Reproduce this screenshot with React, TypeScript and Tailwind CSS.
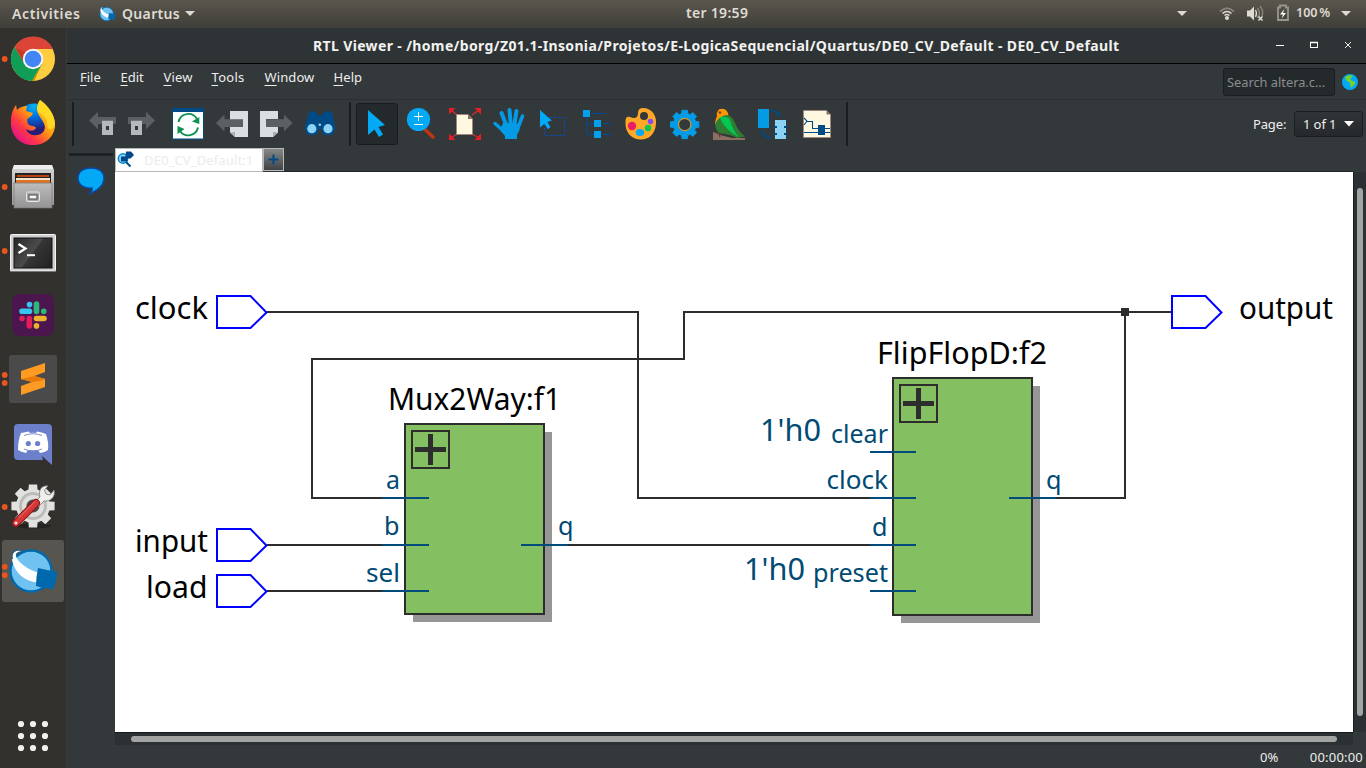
import type { ReactNode } from "react";

type ArtProps = { x: number; y: number; w: number; h: number; children: ReactNode };

function Art({ x, y, w, h, children }: ArtProps) {
  return (
    <svg className="block shrink-0" width={w} height={h} viewBox={`${x} ${y} ${w} ${h}`} fill="none">
      {children}
    </svg>
  );
}

function Tool({ x, w, children }: { x: number; w: number; children: ReactNode }) {
  return (
    <Art x={x} y={100} w={w} h={48}>
      {children}
    </Art>
  );
}

function QuartusLogo() {
  return (
    <>
      <circle cx="31" cy="571" r="20.5" fill="#70c2f0" stroke="#0068ac" strokeWidth="2.400" />
      <path d="M22 551C12 548 10 558 14 566C18 576 27 581 36.500 582.500L38 572.500C26 569 17 561 16 556C15.500 552.500 18 551.500 22 551Z" fill="#fff" />
      <path d="M22 550.500C14 548.500 11 553 12.500 559" stroke="#0068ac" strokeWidth="1" />
      <path d="M38 568Q47 570 57 571.500Q57 580 53 589Q44 589 36 586Q36 577 38 568Z" fill="#0068ac" />
    </>
  );
}

const gearPath = (cx: number, cy: number, r: number, inner: number) => {
  const pts: string[] = [];
  for (let i = 0; i < 8; i++) {
    const a = (i * Math.PI) / 4;
    [
      [inner, -0.27],
      [r, -0.19],
      [r, 0.19],
      [inner, 0.27],
    ].forEach(([rad, d]) => pts.push(`${(cx + rad * Math.cos(a + d)).toFixed(2)} ${(cy + rad * Math.sin(a + d)).toFixed(2)}`));
  }
  return `M${pts.join("L")}Z`;
};

function Dots({ ys }: { ys: number[] }) {
  return (
    <>
      {ys.map((y) => (
        <circle key={y} cx="4.700" cy={y} r="2.900" fill="#e95420" />
      ))}
    </>
  );
}

function TopBar() {
  return (
    <header className="flex h-7 shrink-0 items-center bg-linear-to-b from-[#59564e] to-[#403e39] text-[14px] font-semibold text-[#dfdbd2]">
      <span className="-mt-px ml-3 w-[69px] whitespace-nowrap tracking-[0.6px]">Activities</span>
      <svg className="ml-[18px] block" width="17" height="16" viewBox="8 548 51 46" fill="none">
        <QuartusLogo />
      </svg>
      <span className="-mt-px ml-[6px] w-[58px] whitespace-nowrap tracking-[0.330px]">Quartus</span>
      <Art x={180} y={0} w={20} h={28}>
        <path d="M185 11h10l-5 5z" fill="#dfdbd2" />
      </Art>
      <span className="-mt-[2px] ml-[486px] w-[66px] whitespace-nowrap text-[14px] tracking-[0.300px]">ter 19:59</span>
      <div className="grow" />
      <Art x={1170} y={0} w={124} h={28}>
        <path d="M1177 11h10l-5 5z" fill="#dfdbd2" />
        <path d="M1220 11.500Q1227 5 1234 11.500" stroke="#858178" strokeWidth="2" />
        <path d="M1222.500 13.500Q1227 9.500 1231.500 13.500M1224.500 15.500Q1227 13.500 1229.500 15.500" stroke="#dfdbd2" strokeWidth="1.600" />
        <circle cx="1227" cy="18" r="2" fill="#dfdbd2" />
        <path d="M1247 10.500h3l4-4v14l-4-4h-3z" fill="#dfdbd2" />
        <path d="M1255.500 10q2 3.500 0 7" stroke="#dfdbd2" strokeWidth="1.300" />
        <path d="M1257.500 8q4 5.500 0 10M1260 6q4 5 2 10" stroke="#858178" strokeWidth="1.500" />
        <path d="M1258.500 16.500l4 4m0-4l-4 4" stroke="#dfdbd2" strokeWidth="1.600" />
        <path d="M1278 7.500h2v-2h6v2h2v12.500h-10z" stroke="#99968e" strokeWidth="1.800" />
        <path d="M1284.500 9l-4.500 5.500h3l-1.500 4 4.500-5.500h-3z" fill="#fff" />
      </Art>
      <span className="-mt-[2px] ml-[2px] w-[38px] whitespace-nowrap text-[12.500px] [word-spacing:-1.500px]">100 %</span>
      <Art x={1334} y={0} w={32} h={28}>
        <path d="M1341 11h10l-5 5z" fill="#dfdbd2" />
      </Art>
    </header>
  );
}

function Dock() {
  return (
    <aside className="flex w-[67px] shrink-0 flex-col border-r border-[#3c3b31] bg-[#33312d]">
      <Art x={0} y={28} w={66} h={62}>
        <Dots ys={[59]} />
        <circle cx="33" cy="59" r="22" fill="#ffcd40" />
        <path d="M33 59L14.500 47A22 22 0 0 1 53 49H33Z" fill="#db4437" />
        <path d="M14.500 47A22 22 0 0 0 32 81L42 64L33 59L25 64Z" fill="#0f9d58" />
        <path d="M14.500 47L24 63L30 55Z" fill="#c53929" />
        <path d="M42 64L32 81L34 81Z" fill="#bf9000" />
        <circle cx="33" cy="59" r="10.200" fill="#f5f5f5" />
        <circle cx="33" cy="59" r="8.300" fill="#4285f4" />
      </Art>
      <Art x={0} y={90} w={66} h={65}>
        <defs>
          <linearGradient id="foxBody" x1="50" y1="104" x2="16" y2="138" gradientUnits="userSpaceOnUse">
            <stop stopColor="#ffe226" />
            <stop offset="0.450" stopColor="#ff980e" />
            <stop offset="0.750" stopColor="#ff3647" />
            <stop offset="1" stopColor="#e31587" />
          </linearGradient>
          <radialGradient id="foxGlobe" cx="34" cy="106" r="24" gradientUnits="userSpaceOnUse">
            <stop stopColor="#00b7f4" />
            <stop offset="0.500" stopColor="#0068dd" />
            <stop offset="1" stopColor="#281c75" />
          </radialGradient>
        </defs>
        <circle cx="34" cy="122" r="18.500" fill="url(#foxGlobe)" />
        <path d="M40 100C48 106 56 116 55 127C53 140 42 146 31 145C18 144 10 133 11 121C11 114 13 109 16 105L17 110C20 107 23 106 27 106L26 111L33 113C32 117 28 117 27 120L28 124C31 127 34 125 36 128C33 132 29 131 26 129C28 136 39 138 44 131C48 123 38 118 37 110C37 106 38 102 40 100Z" fill="url(#foxBody)" />
        <path d="M40 100C48 105 55 115 55 124C51 133 47 130 47 122C47 116 37 113 37 109C37 105 39 103 40 100Z" fill="#ffdf27" opacity="0.800" />
      </Art>
      <Art x={0} y={155} w={66} h={65}>
        <defs>
          <linearGradient id="steel" x1="0" y1="166" x2="0" y2="208" gradientUnits="userSpaceOnUse">
            <stop stopColor="#d7d7d7" />
            <stop offset="1" stopColor="#949494" />
          </linearGradient>
        </defs>
        <Dots ys={[187]} />
        <path d="M14 165H52L54 170V205H12V170Z" fill="url(#steel)" />
        <path d="M14 165H52L53 169H13Z" fill="#eee" />
        <rect x="15" y="173" width="36" height="12" fill="#232323" />
        <rect x="17" y="175" width="32" height="2" fill="#b84415" />
        <rect x="16" y="178" width="34" height="2" fill="#f6e7cc" />
        <rect x="16" y="180" width="34" height="3" fill="#df7426" />
        <rect x="14" y="183" width="38" height="25" fill="url(#steel)" stroke="#777" strokeWidth="0.700" />
        <rect x="26.500" y="192" width="13" height="9.500" rx="1.500" fill="#a8a8a8" stroke="#e6e6e6" />
        <rect x="29" y="195" width="8" height="4" fill="#f6f6f6" stroke="#444" />
      </Art>
      <Art x={0} y={220} w={66} h={64}>
        <defs>
          <linearGradient id="screen" x1="15" y1="240" x2="50" y2="266" gradientUnits="userSpaceOnUse">
            <stop stopColor="#2a2a2a" />
            <stop offset="0.480" stopColor="#4b4b4b" />
            <stop offset="0.520" stopColor="#353535" />
            <stop offset="1" stopColor="#232323" />
          </linearGradient>
        </defs>
        <Dots ys={[251]} />
        <rect x="10.500" y="234.500" width="45" height="36.500" rx="1" fill="#cfcfcf" stroke="#f4f4f4" />
        <path d="M10 271.500H56" stroke="#777" />
        <rect x="14" y="238" width="38" height="30" fill="url(#screen)" stroke="#111" />
        <path d="M18.500 244l7 4.500-7 4.500" stroke="#fff" strokeWidth="2.300" />
        <path d="M27 255.200h8" stroke="#fff" strokeWidth="2" />
      </Art>
      <Art x={0} y={284} w={66} h={63}>
        <rect x="12" y="294" width="42" height="42" rx="8" fill="#4b154d" />
        <g strokeWidth="5.600" strokeLinecap="round">
          <path d="M22 311.300h7.500M29.500 304.500v.1" stroke="#36c5f0" />
          <path d="M36.500 304v7.500M43.700 311.300h.1" stroke="#2eb67d" />
          <path d="M36.500 318.500h7.500M36.500 325.800v.1" stroke="#ecb22e" />
          <path d="M29.300 318.500v7.500M22 318.500h.1" stroke="#e01e5a" />
        </g>
      </Art>
      <Art x={0} y={347} w={66} h={65}>
        <Dots ys={[375, 383]} />
        <rect x="9" y="355" width="48" height="48" rx="2.500" fill="#4a4a4a" />
        <path d="M21 371L45 363V372L34.500 376L45 379V387L21 395V386L32 382L21 379Z" fill="#ff9a22" />
        <path d="M21 379L34.500 376L45 379L40 381L32 382Z" fill="#e87c09" />
      </Art>
      <Art x={0} y={412} w={66} h={62}>
        <path d="M18 424H48Q52 424 52 428V465L42 456L43 460H18Q14 460 14 456V428Q14 424 18 424Z" fill="#6c7fcb" />
        <path d="M21 433Q25 432 29 431.500L30 433Q33 432.500 36 433L37 431.500Q42 432 46 434Q49 443 48 450Q45 452.500 40 453L38 450Q33 451 28 450L26 453Q21 452 18 450Q18 440 21 433Z" fill="#fff" />
        <circle cx="28.300" cy="443.500" r="2.600" fill="#6c7fcb" />
        <circle cx="37.600" cy="443.500" r="2.600" fill="#6c7fcb" />
        <path d="M24 435.500Q33 432 42 435.500M24 449Q33 453 42 449" stroke="#6c7fcb" strokeWidth="0.900" />
      </Art>
      <Art x={0} y={474} w={66} h={66}>
        <Dots ys={[507]} />
        <ellipse cx="34" cy="526" rx="17" ry="2.500" fill="#1c1b19" opacity="0.600" />
        <path d={gearPath(33, 506, 22, 17)} fill="#e2e2e0" />
        <circle cx="33" cy="506" r="14" fill="#bcbcba" />
        <circle cx="33" cy="506" r="11" fill="#e0e0de" />
        <circle cx="33" cy="506" r="6.500" fill="#4a4a48" />
        <path d="M34 503L40 497C38 490 42 485 48 486L44.500 490L46 494L50 495L54 490C56 497 50 502 44 501L38 507Z" fill="#efefed" stroke="#777" strokeWidth="0.800" />
        <path d="M16 523L36 503" stroke="#8b1518" strokeWidth="8" strokeLinecap="round" />
        <path d="M16 523L36 503" stroke="#d53636" strokeWidth="6" strokeLinecap="round" />
        <path d="M19 517.500L35 501.500" stroke="#ee7777" strokeWidth="1" />
        <circle cx="16" cy="523" r="1.500" fill="#eee" />
      </Art>
      <Art x={0} y={540} w={66} h={62}>
        <rect x="2" y="540" width="62" height="62" rx="3" fill="#575550" />
        <QuartusLogo />
        <Dots ys={[566.8, 575.2]} />
      </Art>
      <div className="grow" />
      <Art x={0} y={700} w={66} h={68}>
        {[724, 736, 748].map((y) => [21, 33, 45].map((x) => <circle key={`${x}-${y}`} cx={x} cy={y} r="3.100" fill="#f2f1ee" />))}
      </Art>
    </aside>
  );
}

function Cursor({ x, y, s = 1, fill }: { x: number; y: number; s?: number; fill: string }) {
  return <path transform={`translate(${x} ${y}) scale(${s})`} d="M0 0L17 15L10.500 17L15 24.500L11 27L6.500 19.500L0 25Z" fill={fill} />;
}

function Toolbar() {
  return (
    <div className="flex h-12 items-start border-t border-[#2b3033]">
      <div className="flex">
        <Tool x={67} w={14}>
          <path d="M73 102v44" stroke="#1b1e20" strokeWidth="2" />
        </Tool>
        <Tool x={81} w={37}>
          <path d="M89 120.500L98 111.800V117H116V124H98V129.300Z" fill="#5c6062" />
          <path d="M102 120.700h11v14.300h-11zM106 126v4h3v-4z" fill="#b5b9bb" fillRule="evenodd" />
        </Tool>
        <Tool x={118} w={40}>
          <path d="M155 120.500L146 111.800V117H128V124H146V129.300Z" fill="#5c6062" />
          <path d="M131 120.700h11v14.300h-11zM135 126v4h3v-4z" fill="#b5b9bb" fillRule="evenodd" />
        </Tool>
        <Tool x={158} w={52}>
          <rect x="172" y="108" width="32" height="31.500" fill="#004a86" />
          <rect x="173" y="112" width="30" height="26.500" fill="#fff" />
          <path d="M178.500 122A10 10 0 0 1 197 119M198 127.500A10 10 0 0 1 180 131" stroke="#0b9150" strokeWidth="1.900" />
          <path d="M199.300 117V124L192 121.500ZM177.500 134V126L184.500 129Z" fill="#0b9150" />
        </Tool>
        <Tool x={210} w={42}>
          <path d="M230 111H248V137H235L230 132.500V126H243V120H230Z" fill="#dadee0" />
          <path d="M230 132.500L235 132V137Z" fill="#a9adaf" />
          <path d="M216 123L224.500 114.500V119.300H243V127H224.500V131.500Z" fill="#5c6062" />
        </Tool>
        <Tool x={252} w={46}>
          <path d="M260 111H278V119H266V127H278V132.500L273 137H260Z" fill="#dadee0" />
          <path d="M278 132.500L273 132V137Z" fill="#a9adaf" />
          <path d="M292.500 123L284 114.500V119.300H266V127H284V131.500Z" fill="#5c6062" />
        </Tool>
        <Tool x={298} w={46}>
          <path d="M309 112Q313 110 317 113L318.500 116H321.500L323 113Q327 110 332 112L335 126Q336 135 328 135.500Q322 135 321 129H319Q318 135 312 135.500Q304 135 305 126Z" fill="#004a86" />
          <circle cx="311.800" cy="128.700" r="4.600" fill="#8bd3f6" />
          <circle cx="328" cy="128.700" r="4.600" fill="#8bd3f6" />
          <circle cx="319.800" cy="124.700" r="1.300" fill="#8bd3f6" />
        </Tool>
        <Tool x={344} w={10}>
          <path d="M350 102v44" stroke="#1b1e20" strokeWidth="2" />
        </Tool>
        <Tool x={354} w={46}>
          <rect x="356.500" y="103.500" width="41" height="41" rx="2.500" fill="#24292b" stroke="#191c1e" />
          <Cursor x={368} y={110} fill="#03a9f4" />
        </Tool>
        <Tool x={400} w={42}>
          <path d="M424.500 129L434 138" stroke="#bf360c" strokeWidth="3.400" />
          <circle cx="418.500" cy="119.500" r="11.600" fill="#03a9f4" />
          <path d="M418.500 112v9M414 116.500h9M414 124.500h9" stroke="#fff" />
        </Tool>
        <Tool x={442} w={44}>
          <path d="M451 110L457 115M479 110L472 115M451 138L457 134M479 138L472 134" stroke="#e12a2a" strokeWidth="1.200" />
          <path d="M449 108h6.500l-6.500 6.500zM481 108h-6.500l6.500 6.500zM449 140h6.500l-6.500-6.500zM481 140h-6.500l6.500-6.500z" fill="#e71e25" />
          <path d="M456.500 114.500H468L472.500 119V134.500H456.500Z" fill="#fff8e1" stroke="#a1887f" />
          <path d="M468 114.500L472.500 119H468Z" fill="#8d6e63" />
        </Tool>
        <Tool x={486} w={44}>
          <g stroke="#039be5" strokeLinecap="round">
            <path d="M495 123.500L506 133" strokeWidth="3.500" />
            <path d="M501.500 113L507 127" strokeWidth="4" />
            <path d="M509.500 110L511 127" strokeWidth="4" />
            <path d="M516.500 111L514 127" strokeWidth="4" />
            <path d="M522.500 116L517.500 129" strokeWidth="3.500" />
          </g>
          <path d="M503 123L519 123.500L519.500 130L517 135V139H505V136L500 130Z" fill="#039be5" />
        </Tool>
        <Tool x={530} w={44}>
          <rect x="544.500" y="117.500" width="20" height="18" stroke="#0b4bb3" strokeDasharray="3 1.500" />
          <Cursor x={540} y={110} s={0.7} fill="#03a9f4" />
        </Tool>
        <Tool x={574} w={44}>
          <path d="M592 113.500h14M586.500 117v17.500H612M586.500 123.500H612" stroke="#004a96" />
          <path d="M583 110h7v7h-7zM594 120h7v7h-7zM594 131h7v7h-7z" fill="#03a0ec" />
          <path d="M601 123.500h2M601 134.500h2" stroke="#33383a" />
        </Tool>
        <Tool x={618} w={44}>
          <path d="M643 108C652 108 657 116 656 124C655 135 648 140 640 139.500C630 139 625 131 625.500 122C625.500 117 627 116 630 117C635 119 638 118 638 113Q638 108 643 108Z" fill="#ffa726" />
          <circle cx="644" cy="116" r="4" fill="#33383a" />
          <circle cx="632" cy="126" r="4.200" fill="#e91e63" />
          <ellipse cx="640" cy="132.500" rx="4.200" ry="3.600" fill="#03a9f4" />
          <circle cx="648" cy="128" r="3.200" fill="#00c853" />
          <circle cx="650.500" cy="121.500" r="2.700" fill="#7c4dff" />
        </Tool>
        <Tool x={662} w={44}>
          <path d={gearPath(684.7, 124.5, 14.4, 11.3)} fill="#039be5" stroke="#039be5" strokeLinejoin="round" />
          <circle cx="684.700" cy="124.500" r="6.200" fill="#33383a" stroke="#d69a32" strokeWidth="1.200" />
        </Tool>
        <Tool x={706} w={44}>
          <path d="M713 132L722 135.500L732 138H745V140H713Z" fill="#8d6e63" />
          <path d="M715 123Q715.500 119 717 116Q715.500 109 722 108.800Q728 109 728.500 116L721 120L716 125Z" fill="#ff9800" />
          <path d="M714.500 110.500L718.500 110L717 113Z" fill="#4e342e" />
          <circle cx="720" cy="112.500" r="1.200" fill="#5d4037" />
          <path d="M726.500 115Q733 116 735.500 124Q738 131 745 136.500L737 138Q727 133 720 133.500Q713.500 129 716 122Q720 116 726.500 115Z" fill="#2e7d32" />
          <path d="M719.500 117Q729 115.500 730.500 121Q732 129 739 137.500Q724 129 719.500 117Z" fill="#00c853" />
          <path d="M716 132l3 2 1 3M721 133l2 3" stroke="#5d4037" strokeWidth="1.200" />
        </Tool>
        <Tool x={750} w={46}>
          <rect x="758" y="109" width="11" height="19" fill="#039be5" />
          <rect x="775" y="120" width="11" height="19" fill="#8bd3f6" />
          <path d="M773.500 127h3.500M773.500 134h3.500M784 127h3.500M784 134h3.500M771.500 110.500Q778 111 780.500 117M762 130Q763 137 770.500 138" stroke="#004a86" strokeWidth="2" />
        </Tool>
        <Tool x={796} w={42}>
          <path d="M803.500 110.500H826.500L830.500 114.500V137.500H803.500Z" fill="#fff8e1" stroke="#a1887f" />
          <path d="M826.500 110.500L830.500 114.500H826.500Z" fill="#8d6e63" />
          <path d="M804 118l3 3-3 4M807 121.500h5.500v7H830M804 132.500H830" stroke="#004a86" strokeWidth="1.100" />
          <rect x="818" y="125" width="7" height="10" fill="#004a86" />
        </Tool>
        <Tool x={838} w={16}>
          <path d="M847 102v44" stroke="#1b1e20" strokeWidth="2" />
        </Tool>
      </div>
      <div className="ml-auto mr-[3px] mt-[11px] flex items-center text-[13px] text-[#f0f0ee]">
        <span className="mr-2 w-[33px] whitespace-nowrap tracking-[-0.150px]">Page:</span>
        <div className="flex h-[26px] w-[69px] items-center justify-between rounded-[3px] border border-[#1b1e20] bg-linear-to-b from-[#303537] to-[#26292b] pl-2 pr-2">
          <span className="whitespace-nowrap tracking-[-0.100px]">1 of 1</span>
          <svg width="10" height="6" viewBox="0 0 10 6">
            <path d="M0 0h10l-5 5.500z" fill="#fff" />
          </svg>
        </div>
      </div>
    </div>
  );
}

function MenuBar() {
  return (
    <div className="flex h-[35px] items-start text-[13px] text-[#eeeeec]">
      <nav className="ml-[13px] mt-1 flex">
        <span className="w-[40.500px]"><u className="underline-offset-[3px]">F</u>ile</span>
        <span className="w-[43px]"><u className="underline-offset-[3px]">E</u>dit</span>
        <span className="w-[48px] tracking-[0.150px]"><u className="underline-offset-[3px]">V</u>iew</span>
        <span className="w-[53px] tracking-[0.300px]"><u className="underline-offset-[3px]">T</u>ools</span>
        <span className="w-[69px] tracking-[0.100px]"><u className="underline-offset-[3px]">W</u>indow</span>
        <span className="tracking-[0.100px]"><u className="underline-offset-[3px]">H</u>elp</span>
      </nav>
      <div className="ml-auto mt-1 flex h-7 w-[112px] items-center rounded-[3px] border border-[#1b1e20] bg-[#24292b] pl-[3px] text-[12.800px] text-[#8b8e8f]">
        <span className="whitespace-nowrap">Search altera.c...</span>
      </div>
      <Art x={1335} y={64} w={31} h={35}>
        <circle cx="1350" cy="82" r="8" fill="#03a9f4" />
        <path d="M1345 77Q1349 74 1353 76L1350 79L1352 81Q1356 81 1355 84L1351 88L1350 83L1346 80Z" fill="#76d22b" />
      </Art>
    </div>
  );
}

const wires = "M267 312H638V498H870M1171 312H684V359H312V498H383M1125 312V498H1056M267 545H383M568 545H870M267 591H383";
const pins = "M382 498H429M382 545H429M382 591H429M521 545H568M870 452H916M870 498H916M870 545H916M870 591H916M1009 498H1056";

type Label = { t: string; x: number; y: number; w: number; s: number; c: string };
const labels: Label[] = [
  { t: "clock", x: 135, y: 319, w: 73, s: 30, c: "#000" },
  { t: "input", x: 135, y: 552, w: 73, s: 30, c: "#000" },
  { t: "load", x: 146, y: 598, w: 61.5, s: 30, c: "#000" },
  { t: "output", x: 1239, y: 319, w: 94, s: 30, c: "#000" },
  { t: "Mux2Way:f1", x: 388, y: 410, w: 173, s: 30, c: "#000" },
  { t: "FlipFlopD:f2", x: 877, y: 364, w: 170, s: 30, c: "#000" },
  { t: "1'h0", x: 760, y: 441, w: 61, s: 30, c: "#004a74" },
  { t: "1'h0", x: 744, y: 580, w: 61, s: 30, c: "#004a74" },
  { t: "a", x: 386, y: 489, w: 14, s: 24.5, c: "#004a74" },
  { t: "b", x: 384, y: 535, w: 15.5, s: 24.5, c: "#004a74" },
  { t: "sel", x: 366, y: 582, w: 34, s: 24.5, c: "#004a74" },
  { t: "q", x: 558, y: 535, w: 15.5, s: 24.5, c: "#004a74" },
  { t: "clear", x: 831, y: 443, w: 57, s: 24.5, c: "#004a74" },
  { t: "clock", x: 826.5, y: 489, w: 61.5, s: 24.5, c: "#004a74" },
  { t: "d", x: 872, y: 536, w: 15.5, s: 24.5, c: "#004a74" },
  { t: "preset", x: 813, y: 582, w: 75, s: 24.5, c: "#004a74" },
  { t: "q", x: 1046, y: 489, w: 15.5, s: 24.5, c: "#004a74" },
];

function Block({ x, y, h }: { x: number; y: number; h: number }) {
  return (
    <>
      <rect x={x + 8} y={y + 8} width="139" height={h - 1} fill="#969696" />
      <rect x={x} y={y} width="139" height={h - 1} fill="#84c061" stroke="#2d2d2d" strokeWidth="2" />
      <rect x={x + 7} y={y + 7} width="37" height="37" stroke="#2d2d2d" strokeWidth="2" />
      <path d={`M${x + 10} ${y + 25.5}h31M${x + 25.5} ${y + 10}v31`} stroke="#2d2d2d" strokeWidth="5" />
    </>
  );
}

function Schematic() {
  return (
    <Art x={115} y={172} w={1238} h={560}>
      <path d={wires} stroke="#2d2d2d" strokeWidth="2" />
      <rect x="1121" y="308" width="8" height="8" fill="#2d2d2d" />
      <Block x={405} y={424} h={191} />
      <Block x={893} y={378} h={238} />
      <path d={pins} stroke="#004a7c" strokeWidth="2" />
      {[
        [217, 296],
        [217, 529],
        [217, 575],
        [1172, 296],
      ].map(([x, y]) => (
        <path key={`${x}-${y}`} d={`M${x} ${y}h33.500l16 16.500l-16 15.500h-33.500z`} stroke="#0000ff" strokeWidth="2" />
      ))}
      {labels.map((l) => (
        <text key={`${l.x}-${l.y}`} x={l.x} y={l.y + 0.3} fontSize={l.s} fill={l.c} textLength={l.w} lengthAdjust="spacingAndGlyphs">
          {l.t}
        </text>
      ))}
    </Art>
  );
}

export default function App() {
  return (
    <div className="flex h-[768px] w-[1366px] flex-col overflow-hidden bg-[#33383b] font-['Noto_Sans',sans-serif] leading-[18px]">
      <TopBar />
      <div className="flex min-h-0 grow">
        <Dock />
        <main className="flex min-w-0 grow flex-col">
          <div className="flex h-9 shrink-0 items-center border-b border-black bg-[#2e3335] text-[14px] font-bold text-[#f2f2f0]">
            <div className="ml-[246px] w-[808px] whitespace-nowrap tracking-[0.360px]">
              RTL Viewer - /home/borg/Z01.1-Insonia/Projetos/E-LogicaSequencial/Quartus/DE0_CV_Default - DE0_CV_Default
            </div>
            <div className="grow" />
            <Art x={1270} y={28} w={96} h={35}>
              <path d="M1276 45.500h8" stroke="#fff" />
              <rect x="1310.500" y="42.500" width="7" height="5" stroke="#fff" />
              <path d="M1310 42.500h8" stroke="#fff" strokeWidth="1.500" />
              <path d="M1345 42l6 6m0-6l-6 6" stroke="#eee" />
            </Art>
          </div>
          <MenuBar />
          <Toolbar />
          <div className="flex min-h-0 grow">
            <div className="w-12 shrink-0">
              <Art x={67} y={147} w={48} h={60}>
                <path d="M69 154.500h44" stroke="#1b1e20" strokeWidth="2.500" />
                <path d="M91 168C99 168 104 172 104 178C104 185 99 190 89 194Q93 190 92 188C83 189 78 184 78 178C78 172 83 168 91 168Z" fill="#03a9f4" stroke="#0d47a1" strokeWidth="1.500" />
              </Art>
            </div>
            <div className="flex w-[1238px] shrink-0 flex-col">
              <div className="mt-px flex h-6 shrink-0 items-stretch">
                <div className="flex w-[148px] items-center border border-[#b8b8b8] bg-white text-[13.100px] text-[#ebebeb]">
                  <Art x={116} y={149} w={28} h={22}>
                    <circle cx="123" cy="158.500" r="4.700" fill="#8bd3f6" stroke="#0288d1" strokeWidth="1.500" />
                    <path d="M126 162l4.500 4.500" stroke="#004a86" strokeWidth="2" />
                    <path d="M121 156.500h4.500l.5-5h5l3 3.500-3.500 3.500h-3v3h-6.500z" fill="#00468b" />
                  </Art>
                  <span className="whitespace-nowrap tracking-[0.080px]">DE0_CV_Default:1</span>
                </div>
                <div className="mb-px flex w-[21px] items-center justify-center border border-[#b8b8b8] bg-linear-to-b from-[#888] to-[#404447]">
                  <svg width="11" height="11" viewBox="0 0 11 11">
                    <path d="M5.500 .5v10M.5 5.500h10" stroke="#004a86" strokeWidth="2" />
                  </svg>
                </div>
                <div className="grow border-b border-[#202426]" />
              </div>
              <div className="h-[560px] shrink-0 bg-white">
                <Schematic />
              </div>
              <div className="h-[13px] shrink-0 border-t border-[#161819] bg-[#2b3032] pl-4 pt-[3px]">
                <div className="h-[6px] w-[1206px] rounded-full bg-[#a2a4a3]" />
              </div>
              <div className="flex h-[23px] items-center pt-px text-[13px] text-[#eeeeec]">
                <span className="ml-auto -mr-[10px] flex w-[103px] shrink-0 justify-between whitespace-nowrap">
                  <span>0%</span>
                  <span className="tracking-[0.200px]">00:00:00</span>
                </span>
              </div>
            </div>
            <div className="mt-[25px] h-[560px] grow border-l border-[#1b1e20] bg-[#2b3032] pl-[3px] pt-4">
              <div className="h-[528px] w-[6px] rounded-full bg-[#a2a4a3]" />
            </div>
          </div>
        </main>
      </div>
    </div>
  );
}
